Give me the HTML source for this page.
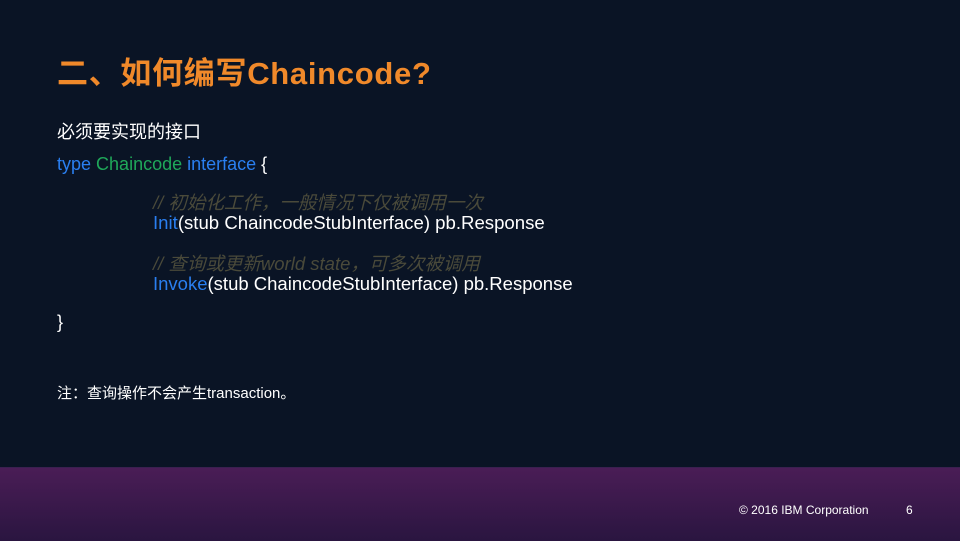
<!DOCTYPE html>
<html><head><meta charset="utf-8"><style>
body{margin:0;width:960px;height:540px;overflow:hidden;background:#0a1425;font-family:"Liberation Sans","Noto Sans CJK SC",sans-serif;position:relative;color:#fff}
.t{position:absolute;white-space:nowrap}
.b{color:#2a7ff0}.g{color:#1fa85a}.c{color:#4a4a3a;font-style:italic}
.foot{position:absolute;left:0;top:467px;width:960px;height:73px;background:linear-gradient(#4a1d56,#2a1540);border-top:1px solid #3a2050}
</style></head><body>
<div class="t" style="left:57px;top:48px;font-size:31px;font-weight:bold;color:#f0892a;letter-spacing:0.7px">二、如何编写Chaincode?</div>
<div class="t" style="left:57px;top:118px;font-size:18px">必须要实现的接口</div>
<div class="t" style="left:57px;top:154px;font-size:18px"><span class="b">type</span> <span class="g">Chaincode</span> <span class="b">interface</span> {</div>
<div class="t c" style="left:153px;top:189px;font-size:18.5px">// 初始化工作，一般情况下仅被调用一次</div>
<div class="t" style="left:153px;top:212px;font-size:18.6px"><span class="b">Init</span>(stub ChaincodeStubInterface) pb.Response</div>
<div class="t c" style="left:153px;top:250px;font-size:18.5px">// 查询或更新world state，可多次被调用</div>
<div class="t" style="left:153px;top:273px;font-size:18.5px"><span class="b">Invoke</span>(stub ChaincodeStubInterface) pb.Response</div>
<div class="t" style="left:57px;top:312px;font-size:18px">}</div>
<div class="t" style="left:57px;top:382px;font-size:15px">注：查询操作不会产生transaction。</div>
<div class="foot">
<div class="t" style="left:739px;top:35px;font-size:12px">© 2016 IBM Corporation</div>
<div class="t" style="left:906px;top:35px;font-size:12px">6</div>
</div>
</body></html>
